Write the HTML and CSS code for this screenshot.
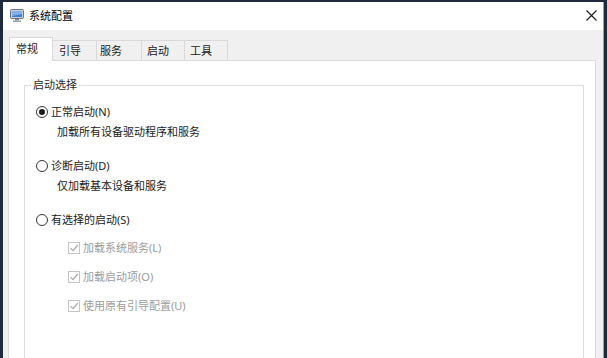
FILE: index.html
```html
<!DOCTYPE html>
<html lang="zh-CN">
<head>
<meta charset="utf-8">
<title>系统配置</title>
<link rel="stylesheet" href="styles.css">
</head>
<body>
<div class="window">
  <div class="titlebar">
    <div class="title">
      <svg class="app-icon" width="14" height="13" viewBox="0 0 14 13">
        <rect x="0.5" y="0.5" width="13" height="9" rx="1" fill="#c9ced6" stroke="#6b7480"/>
        <rect x="2" y="2" width="10" height="6" fill="#3f7fd0"/>
        <path d="M2 2h10v3L2 7z" fill="#7fb2ec"/>
        <rect x="5" y="10" width="4" height="1.5" fill="#7d8590"/>
        <rect x="3" y="11.5" width="8" height="1.5" fill="#9aa2ac"/>
      </svg>
      <span class="title-text">系统配置</span>
    </div>
    <svg class="close" width="11" height="11" viewBox="0 0 11 11">
      <path d="M0.5 0.5L10.5 10.5M10.5 0.5L0.5 10.5" stroke="#1a1a1a" stroke-width="1.1" fill="none"/>
    </svg>
  </div>
  <div class="body">
    <div class="tabs">
      <div class="tab active">常规</div>
      <div class="tab">引导</div>
      <div class="tab">服务</div>
      <div class="tab">启动</div>
      <div class="tab">工具</div>
    </div>
    <div class="panel">
      <fieldset class="group">
        <legend class="group-label">启动选择</legend>
        <div class="opt first">
          <span class="radio checked"></span>
          <span class="opt-text">正常启动(N)</span>
        </div>
        <div class="desc">加载所有设备驱动程序和服务</div>
        <div class="opt">
          <span class="radio"></span>
          <span class="opt-text">诊断启动(D)</span>
        </div>
        <div class="desc">仅加载基本设备和服务</div>
        <div class="opt">
          <span class="radio"></span>
          <span class="opt-text">有选择的启动(S)</span>
        </div>
        <div class="check first-check">
          <span class="box"><svg width="10" height="10" viewBox="0 0 10 10"><path d="M1.5 5.2L4 7.7L8.8 2" stroke="#a8a8a8" stroke-width="1.2" fill="none"/></svg></span>
          <span class="check-text">加载系统服务(L)</span>
        </div>
        <div class="check">
          <span class="box"><svg width="10" height="10" viewBox="0 0 10 10"><path d="M1.5 5.2L4 7.7L8.8 2" stroke="#a8a8a8" stroke-width="1.2" fill="none"/></svg></span>
          <span class="check-text">加载启动项(O)</span>
        </div>
        <div class="check">
          <span class="box"><svg width="10" height="10" viewBox="0 0 10 10"><path d="M1.5 5.2L4 7.7L8.8 2" stroke="#a8a8a8" stroke-width="1.2" fill="none"/></svg></span>
          <span class="check-text">使用原有引导配置(U)</span>
        </div>
      </fieldset>
    </div>
  </div>
</div>
</body>
</html>
```

FILE: styles.css
```css
html, body {
  margin: 0;
  padding: 0;
}
body {
  width: 607px;
  height: 358px;
  overflow: hidden;
  background: #1c2a3b;
  font-family: "Noto Sans", "Noto Sans CJK SC", sans-serif;
  font-size: 11px;
  color: #1a1a1a;
}
.window {
  margin: 2px 0 0 3px;
  width: 600px;
  height: 356px;
  border-right: 1px solid #9aa4ac;
  background: #f0f0f0;
  display: flex;
  flex-direction: column;
}
.titlebar {
  height: 28px;
  flex: none;
  background: #ffffff;
  display: flex;
  align-items: center;
  justify-content: space-between;
  padding: 0 6px 0 7px;
}
.title {
  display: flex;
  align-items: center;
  gap: 5px;
}
.app-icon {
  display: block;
  margin-top: -1px;
}
.title-text {
  font-size: 11px;
  line-height: 28px;
  color: #000;
}
.close {
  display: block;
  margin-top: -1px;
}
.body {
  flex: 1;
  display: flex;
  flex-direction: column;
  padding: 7px 7px 0 5px;
  min-height: 0;
}
.tabs {
  display: flex;
  align-items: flex-start;
  height: 24px;
  margin-bottom: -1px;
  padding-left: 1px;
}
.tab {
  box-sizing: border-box;
  height: 20px;
  margin-top: 3px;
  padding: 2px 0 0 6px;
  width: 44px;
  line-height: 16px;
  border: 1px solid #d9d9d9;
  border-bottom: none;
  border-left: none;
  background: #f0f0f0;
  color: #1a1a1a;
}
.tab.active {
  position: relative;
  z-index: 1;
  height: 24px;
  margin-top: 0;
  width: 44px;
  padding: 3px 0 0 6px;
  border-left: 1px solid #d9d9d9;
  background: #ffffff;
}
.tab:nth-child(3) { width: 45px; padding-left: 3px; }
.tab:nth-child(4) { width: 43px; padding-left: 5px; }
.tab:nth-child(5) { width: 43px; padding-left: 5px; }
.panel {
  flex: 1;
  min-height: 0;
  overflow: hidden;
  background: #ffffff;
  border: 1px solid #d9d9d9;
  border-bottom: none;
  padding: 0 11px 0 15px;
}
.group {
  margin: 17px 0 0 0;
  padding: 10px 0 0 6px;
  height: 320px;
  border: 1px solid #dcdcdc;
  box-sizing: border-box;
  min-width: 0;
}
.group-label {
  padding: 0 2px;
  line-height: 14px;
  color: #2a2a2a;
}
.opt {
  display: flex;
  align-items: center;
  height: 20px;
  padding-left: 5px;
  margin-top: 14px;
}
.opt.first {
  margin-top: 0;
}
.radio {
  box-sizing: border-box;
  width: 12px;
  height: 12px;
  border: 1px solid #333333;
  border-radius: 50%;
  background: #ffffff;
  display: flex;
  align-items: center;
  justify-content: center;
  flex: none;
}
.radio.checked::after {
  content: "";
  width: 6px;
  height: 6px;
  border-radius: 50%;
  background: #1a1a1a;
}
.opt-text {
  margin-left: 3px;
  line-height: 20px;
}
.desc {
  height: 20px;
  line-height: 20px;
  padding-left: 26px;
}
.check {
  display: flex;
  align-items: center;
  height: 20px;
  padding-left: 37px;
  margin-top: 9px;
  color: #9c9c9c;
}
.check.first-check {
  margin-top: 8px;
}
.box {
  box-sizing: border-box;
  width: 12px;
  height: 12px;
  border: 1px solid #c4c4c4;
  display: flex;
  align-items: center;
  justify-content: center;
  flex: none;
}
.box svg {
  display: block;
}
.check-text {
  margin-left: 3px;
  line-height: 20px;
}
```
